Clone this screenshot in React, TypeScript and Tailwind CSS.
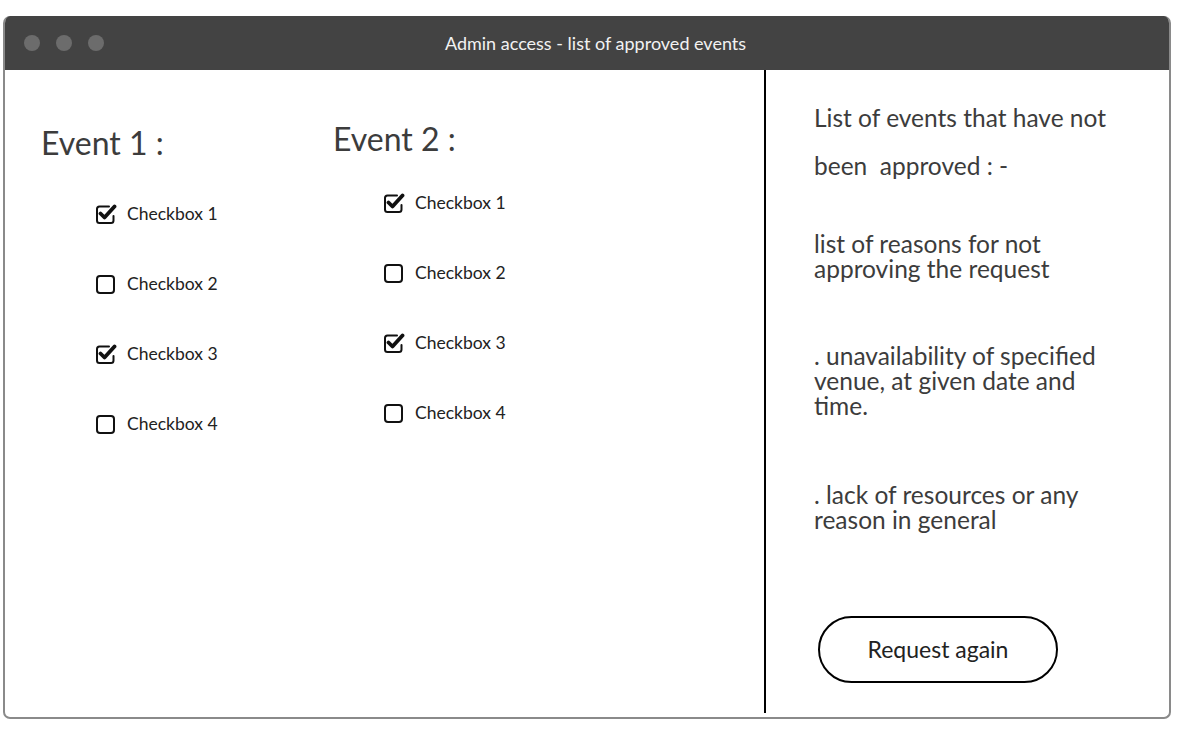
import React from "react";

const font = { fontFamily: "Lato, 'Noto Sans', sans-serif" };

function Box({ checked }: { checked: boolean }) {
  if (checked) {
    return (
      <svg width="22" height="22" viewBox="0 0 22 22" className="shrink-0">
        <path
          d="M14 3.5 H4.5 a2.5 2.5 0 0 0 -2.5 2.5 v11.5 a2.5 2.5 0 0 0 2.5 2.5 h11.5 a2.5 2.5 0 0 0 2.5 -2.5 v-4.5"
          fill="none"
          stroke="#111"
          strokeWidth="2"
          strokeLinecap="round"
        />
        <path
          d="M5.5 10.5 L9.5 14.5 L19.5 3.5"
          fill="none"
          stroke="#111"
          strokeWidth="3.8"
          strokeLinecap="round"
          strokeLinejoin="round"
        />
      </svg>
    );
  }
  return (
    <svg width="22" height="22" viewBox="0 0 22 22" className="shrink-0">
      <rect x="2" y="3" width="17" height="17" rx="3" fill="none" stroke="#111" strokeWidth="2" />
    </svg>
  );
}

function Row({ label, checked }: { label: string; checked: boolean }) {
  return (
    <div className="flex h-[70px] items-start">
      <div className="flex items-center gap-[10px]">
        <Box checked={checked} />
        <span className="text-[17.5px] text-[#222]">{label}</span>
      </div>
    </div>
  );
}

export default function App() {
  const items = [
    { l: "Checkbox 1", c: true },
    { l: "Checkbox 2", c: false },
    { l: "Checkbox 3", c: true },
    { l: "Checkbox 4", c: false },
  ];
  return (
    <div className="h-[739px] w-[1191px] bg-white pl-[3px] pt-[16px]" style={font}>
      <div className="flex h-[703px] w-[1168px] flex-col overflow-hidden rounded-[7px] border-2 border-t-0 border-[#8a8a8a] bg-white">
        <div className="relative flex h-[54px] shrink-0 items-center bg-[#434343]">
          <div className="flex gap-[16px] pl-[19px]">
            <span className="h-[16px] w-[16px] rounded-full bg-[#6c6c6c]" />
            <span className="h-[16px] w-[16px] rounded-full bg-[#6c6c6c]" />
            <span className="h-[16px] w-[16px] rounded-full bg-[#6c6c6c]" />
          </div>
          <div className="flex-1 pr-[102px] pl-[20px] text-center text-[18px] text-[#f2f2f2]">
            Admin access - list of approved events
          </div>
        </div>
        <div className="flex flex-1">
          <div className="flex w-[759px] pl-[36px]">
            <div className="w-[292px] pt-[57px]">
              <div className="text-[32px] leading-none text-[#3c3c3c]">Event 1 :</div>
              <div className="pt-[42px] pl-[54px]">
                {items.map((it) => (
                  <Row key={it.l} label={it.l} checked={it.c} />
                ))}
              </div>
            </div>
            <div className="pt-[53px]">
              <div className="text-[32px] leading-none text-[#3c3c3c]">Event 2 :</div>
              <div className="pt-[35px] pl-[50px]">
                {items.map((it) => (
                  <Row key={it.l} label={it.l} checked={it.c} />
                ))}
              </div>
            </div>
          </div>
          <div className="-mt-[5px] mb-[4px] w-[2px] bg-black" />
          <div className="flex flex-1 flex-col pl-[48px] pt-[24px] text-[24.5px] text-[#3c3c3c]">
            <div className="leading-[48px]">
              <div>List of events that have not</div>
              <div>been&nbsp; approved : -</div>
            </div>
            <div className="mt-[41px] leading-[25px]">
              <div>list of reasons for not</div>
              <div>approving the request</div>
            </div>
            <div className="mt-[62px] leading-[25px]">
              <div>. unavailability of specified</div>
              <div>venue, at given date and</div>
              <div>time.</div>
            </div>
            <div className="mt-[64px] leading-[25px]">
              <div>. lack of resources or any</div>
              <div>reason in general</div>
            </div>
            <button className="mt-[84px] ml-[4px] flex h-[67px] w-[240px] items-center justify-center rounded-full border-2 border-black bg-white text-[23px] text-[#222]">
              Request again
            </button>
          </div>
        </div>
      </div>
    </div>
  );
}
